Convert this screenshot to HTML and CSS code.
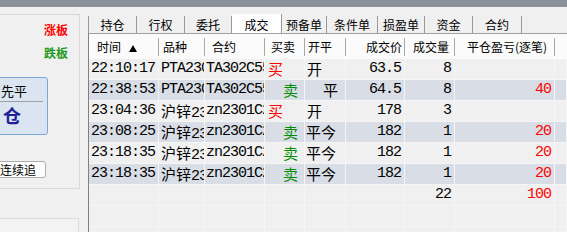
FILE: index.html
```html
<!DOCTYPE html>
<html lang="zh">
<head>
<meta charset="utf-8">
<link rel="stylesheet" href="styles.css">
</head>
<body>
<div class="topbar"></div>
<div class="main">
  <aside class="side">
    <div class="panel">
      <div class="limit up">涨板</div>
      <div class="limit down">跌板</div>
      <div class="order-box">
        <div class="order-label">先平</div>
        <div class="order-icon">仓</div>
      </div>
      <div class="chase-btn">连续追</div>
    </div>
    <div class="panel2"></div>
  </aside>
  <section class="trades">
    <nav class="tabs">
      <div class="tab first w49">持仓</div>
      <div class="tab w48">行权</div>
      <div class="tab w47">委托</div>
      <div class="tab active w50">成交</div>
      <div class="tab w45">预备单</div>
      <div class="tab w51">条件单</div>
      <div class="tab w47">损盈单</div>
      <div class="tab w48">资金</div>
      <div class="tab w49">合约</div>
    </nav>
    <div class="grid">
      <div class="row head">
        <div class="h h1">时间<svg class="sort" width="8" height="7" viewBox="0 0 8 7"><path d="M4 0 L8 7 L0 7 Z" fill="#000"/></svg></div>
        <div class="h h2">品种</div>
        <div class="h h3">合约</div>
        <div class="h h4">买卖</div>
        <div class="h h5">开平</div>
        <div class="h h6">成交价</div>
        <div class="h h7">成交量</div>
        <div class="h h8">平仓盈亏(逐笔)</div>
        <div class="h h9"></div>
      </div>

      <div class="row">
        <div class="c c1">22:10:17</div>
        <div class="c c2">PTA2301</div>
        <div class="c c3">TA302C5500</div>
        <div class="c c4 cjk buy">买</div>
        <div class="c c5 cjk">开</div>
        <div class="c num">63.5</div>
        <div class="c num">8</div>
        <div class="c num"></div>
        <div class="c"></div>
      </div>

      <div class="row alt">
        <div class="c c1">22:38:53</div>
        <div class="c c2">PTA2301</div>
        <div class="c c3">TA302C5500</div>
        <div class="c c4 cjk sell ind">卖</div>
        <div class="c c5 cjk ind">平</div>
        <div class="c num">64.5</div>
        <div class="c num">8</div>
        <div class="c num red">40</div>
        <div class="c"></div>
      </div>

      <div class="row">
        <div class="c c1">23:04:36</div>
        <div class="c c2"><span class="cjk">沪锌</span>2301</div>
        <div class="c c3">zn2301C24000</div>
        <div class="c c4 cjk buy">买</div>
        <div class="c c5 cjk">开</div>
        <div class="c num">178</div>
        <div class="c num">3</div>
        <div class="c num"></div>
        <div class="c"></div>
      </div>

      <div class="row alt">
        <div class="c c1">23:08:25</div>
        <div class="c c2"><span class="cjk">沪锌</span>2301</div>
        <div class="c c3">zn2301C24000</div>
        <div class="c c4 cjk sell ind">卖</div>
        <div class="c c5 cjk jin">平今</div>
        <div class="c num">182</div>
        <div class="c num">1</div>
        <div class="c num red">20</div>
        <div class="c"></div>
      </div>

      <div class="row">
        <div class="c c1">23:18:35</div>
        <div class="c c2"><span class="cjk">沪锌</span>2301</div>
        <div class="c c3">zn2301C24000</div>
        <div class="c c4 cjk sell ind">卖</div>
        <div class="c c5 cjk jin">平今</div>
        <div class="c num">182</div>
        <div class="c num">1</div>
        <div class="c num red">20</div>
        <div class="c"></div>
      </div>

      <div class="row alt">
        <div class="c c1">23:18:35</div>
        <div class="c c2"><span class="cjk">沪锌</span>2301</div>
        <div class="c c3">zn2301C24000</div>
        <div class="c c4 cjk sell ind">卖</div>
        <div class="c c5 cjk jin">平今</div>
        <div class="c num">182</div>
        <div class="c num">1</div>
        <div class="c num red">20</div>
        <div class="c"></div>
      </div>

      <div class="row">
        <div class="c"></div>
        <div class="c"></div>
        <div class="c"></div>
        <div class="c"></div>
        <div class="c"></div>
        <div class="c num"></div>
        <div class="c num">22</div>
        <div class="c num red">100</div>
        <div class="c"></div>
      </div>

      <div class="row">
        <div class="c"></div><div class="c"></div><div class="c"></div><div class="c"></div><div class="c"></div><div class="c"></div><div class="c"></div><div class="c"></div><div class="c"></div>
      </div>
      <div class="row">
        <div class="c"></div><div class="c"></div><div class="c"></div><div class="c"></div><div class="c"></div><div class="c"></div><div class="c"></div><div class="c"></div><div class="c"></div>
      </div>
    </div>
  </section>
</div>
</body>
</html>
```

FILE: styles.css
```css
html, body {
  margin: 0;
  padding: 0;
}
body {
  width: 567px;
  height: 232px;
  overflow: hidden;
  background: #f0f0f0;
  font-family: "Noto Sans CJK SC", sans-serif;
  color: #000;
}
.topbar {
  height: 7px;
  background: #8b919a;
}
.main {
  display: flex;
  gap: 8px;
  height: 225px;
}

/* left side */
.side {
  width: 80px;
  flex: none;
  display: flex;
  flex-direction: column;
}
.panel {
  margin-top: 7px;
  height: 175px;
  box-sizing: border-box;
  border-top: 1px solid #d8d8d8;
  border-right: 1px solid #d8d8d8;
  border-bottom: 1px solid #d8d8d8;
  display: flex;
  flex-direction: column;
}
.limit {
  margin-left: 44px;
  font-size: 12px;
  font-weight: 700;
  line-height: 14px;
}
.up {
  color: #ff0000;
  margin-top: 8px;
}
.down {
  color: #1c9a1c;
  margin-top: 9px;
}
.order-box {
  margin-top: 17px;
  margin-left: -4px;
  width: 52px;
  height: 58px;
  box-sizing: border-box;
  border: 1px solid #7ea6d8;
  border-radius: 3px;
  background: #dbe5f1;
}
.order-label {
  height: 23px;
  line-height: 25px;
  padding-left: 4px;
  margin-right: 4px;
  font-size: 13px;
  border-bottom: 1px solid #a0a0a0;
}
.order-icon {
  padding-left: 6px;
  font-size: 18px;
  font-weight: 700;
  line-height: 26px;
  color: #1f1f9a;
}
.chase-btn {
  margin-top: 26px;
  margin-left: -5px;
  width: 51px;
  height: 17px;
  box-sizing: border-box;
  border: 1px solid #adadad;
  border-radius: 3px;
  background: #fff;
  padding-left: 4px;
  font-size: 12px;
  line-height: 15px;
}
.panel2 {
  margin-top: 29px;
  flex: 1;
  width: 79px;
  box-sizing: border-box;
  border-top: 1px solid #dcdcdc;
  border-right: 1px solid #dcdcdc;
  background: #f3f3f3;
}

/* right side */
.trades {
  flex: 1;
  min-width: 0;
  display: flex;
  flex-direction: column;
}
.tabs {
  margin-top: 7px;
  height: 19px;
  display: flex;
  align-items: flex-end;
}
.tab {
  flex: none;
  height: 17px;
  box-sizing: border-box;
  border-right: 1px solid #9a9a9a;
  text-align: center;
  font-size: 12px;
  line-height: 17px;
}
.tab.first { border-left: 1px solid #9a9a9a; }
.tab.active {
  height: 19px;
  padding-top: 2px;
  background: #fff;
}
.w45 { width: 45px; }
.w47 { width: 47px; }
.w48 { width: 48px; }
.w49 { width: 49px; }
.w50 { width: 50px; }
.w51 { width: 51px; }

.grid {
  flex: 1;
  border-top: 1px solid #a0a0a0;
  border-left: 1px solid #808080;
  overflow: hidden;
}
.row {
  display: grid;
  grid-template-columns: 70px 46px 60px 40px 41px 59px 50px 100px 1fr;
  height: 21px;
}
.row.alt { background: #d9dee6; }
.row.head {
  height: 25px;
  background: #fbfbfb;
}
.h {
  font-size: 12px;
  line-height: 25px;
  white-space: nowrap;
  overflow: hidden;
  background: linear-gradient(#a8a8a8, #a8a8a8) right center / 1px 18px no-repeat;
}
.h9 { background: none; }
.h1 { padding-left: 8px; }
.h2 { padding-left: 4px; }
.h3 { padding-left: 7px; }
.h4 { padding-left: 6px; }
.h5 { padding-left: 3px; }
.h6 { text-align: right; padding-right: 3px; }
.h7 { text-align: right; padding-right: 6px; }
.h8 { text-align: right; padding-right: 8px; }
.sort {
  margin-left: 8px;
  vertical-align: 0;
}

.c {
  box-sizing: border-box;
  border-right: 1px solid #f6f6f6;
  border-bottom: 1px solid #f6f6f6;
  overflow: hidden;
  white-space: nowrap;
  font-family: "Liberation Mono", "Noto Sans CJK SC", monospace;
  font-size: 15px;
  letter-spacing: -1px;
  line-height: 20px;
}
.cjk {
  font-family: "Noto Sans CJK SC", sans-serif;
  font-size: 15px;
  letter-spacing: 0;
}
.c1 { padding-left: 2px; }
.c2 { padding-left: 2px; }
.c3 { padding-left: 1px; }
.c4 { padding-left: 3px; }
.c5 { padding-left: 2px; }
.c4.ind { padding-left: 18px; }
.c5.ind { padding-left: 18px; }
.c5.jin { padding-left: 1px; }
.num {
  text-align: right;
  padding-right: 3px;
}
.buy { color: #ff0000; }
.sell { color: #008c00; }
.red { color: #ff0000; }
```
